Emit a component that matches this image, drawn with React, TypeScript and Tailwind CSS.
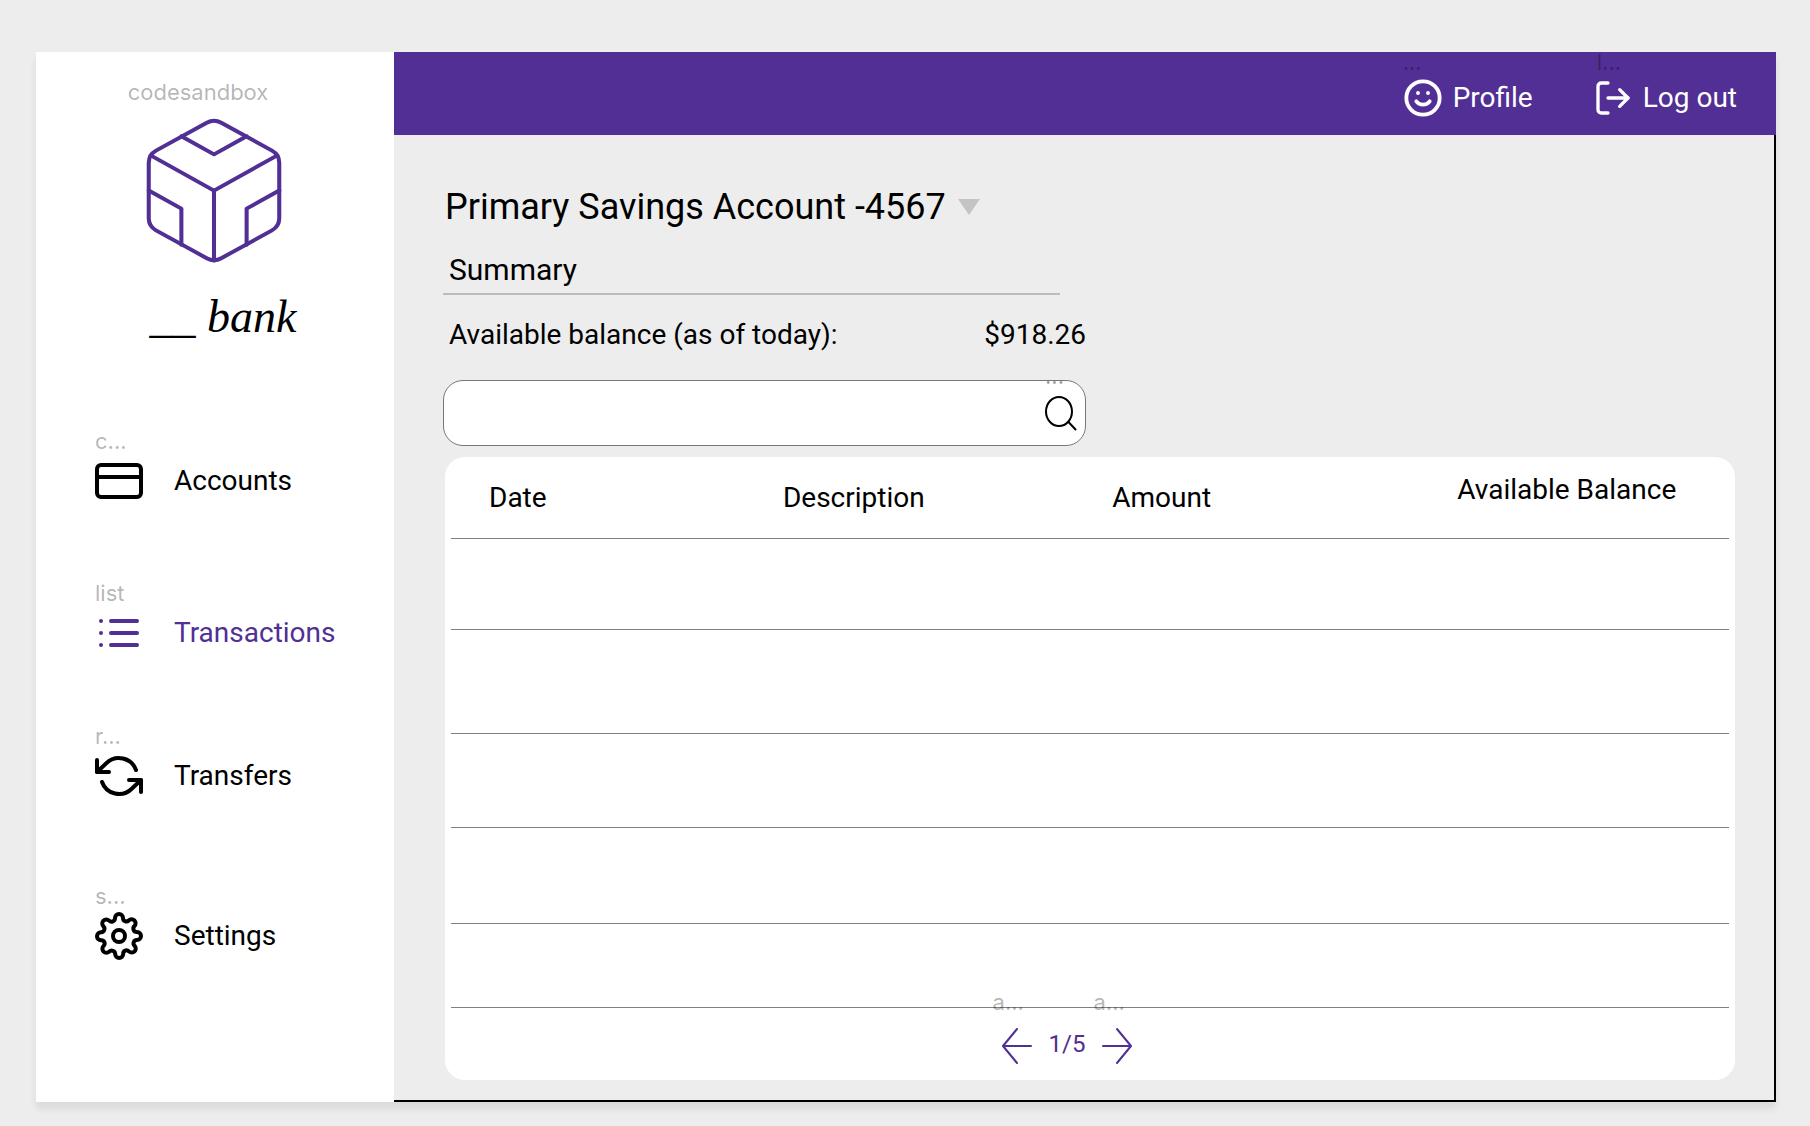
import React from "react";
import {
  FiCodesandbox,
  FiCreditCard,
  FiList,
  FiLogOut,
  FiRefreshCcw,
  FiSettings,
  FiSmile,
} from "react-icons/fi";

type TaggedIconProps = {
  tag: string;
  tagClass?: string;
  children: React.ReactNode;
};

/* An icon with its small layer name floating just above it. */
function TaggedIcon({ tag, tagClass = "text-black/30", children }: TaggedIconProps) {
  return (
    <span className="relative block shrink-0">
      <span
        className={`absolute bottom-full left-0 mb-1 font-[Inter,sans-serif] text-[22px] leading-6 whitespace-nowrap ${tagClass}`}
      >
        {tag}
      </span>
      {children}
    </span>
  );
}

const navItems = [
  { tag: "c...", label: "Accounts", Icon: FiCreditCard, spacing: "mt-[113px]", active: false },
  { tag: "list", label: "Transactions", Icon: FiList, spacing: "mt-[104px]", active: true },
  { tag: "r...", label: "Transfers", Icon: FiRefreshCcw, spacing: "mt-[95px]", active: false },
  { tag: "s...", label: "Settings", Icon: FiSettings, spacing: "mt-[112px]", active: false },
];

function Sidebar() {
  return (
    <aside className="w-[358px] shrink-0 bg-white">
      <div className="flex flex-col items-center">
        <span className="mt-7 pr-[34px] font-[Inter,sans-serif] text-[22px] leading-6 text-black/30">
          codesandbox
        </span>
        <FiCodesandbox
          className="mt-[3px] mr-0.5 h-[167px] w-[174px] text-[#512f94]"
          strokeWidth={0.56}
          preserveAspectRatio="none"
          aria-hidden="true"
        />
        <p className="mt-4 pl-4 font-['Liberation_Serif'] text-[46px] leading-[54px] italic">
          __ bank
        </p>
      </div>
      <nav className="pl-[59px]">
        {navItems.map(({ tag, label, Icon, spacing, active }) => (
          <a
            key={label}
            href={`#${label.toLowerCase()}`}
            className={`flex w-fit items-center gap-[31px] ${spacing} ${active ? "text-[#512f94]" : "text-black"}`}
          >
            <TaggedIcon tag={tag}>
              <Icon className="size-12" aria-hidden="true" />
            </TaggedIcon>
            <span className="text-[28px] leading-8">{label}</span>
          </a>
        ))}
      </nav>
    </aside>
  );
}

function TopBar() {
  return (
    <header className="flex h-[83px] items-center justify-end gap-[60px] bg-[#512f94] pt-2 pr-[39px] text-white">
      <a href="#profile" className="flex items-center gap-2.5">
        <TaggedIcon tag="...">
          <FiSmile className="size-10" strokeWidth={2.3} aria-hidden="true" />
        </TaggedIcon>
        <span className="text-[28px] leading-8">Profile</span>
      </a>
      <a href="#logout" className="flex items-center gap-2.5">
        <TaggedIcon tag="l..." tagClass="pl-1 text-black/30">
          <FiLogOut className="size-10" aria-hidden="true" />
        </TaggedIcon>
        <span className="text-[28px] leading-8">Log out</span>
      </a>
    </header>
  );
}

function Summary() {
  return (
    <section>
      <h1 className="relative flex w-fit items-center gap-3 pl-0.5">
        <select
          aria-label="Account"
          className="appearance-none bg-transparent text-[36px] leading-[44px] font-normal text-black"
        >
          <option>Primary Savings Account -4567</option>
        </select>
        <svg
          className="pointer-events-none h-4 w-[22px] fill-[#c4c4c4]"
          viewBox="0 0 22 16"
          aria-hidden="true"
        >
          <path d="M0 0h22L11 16z" />
        </svg>
      </h1>
      <h2 className="mt-6 w-[617px] border-b-2 border-[#bcbcbc] pb-1.5 pl-1.5 text-[30px] leading-[34px]">
        Summary
      </h2>
      <dl className="mt-6 flex w-[643px] justify-between pl-1.5 text-[28px] leading-8">
        <dt>Available balance (as of today):</dt>
        <dd>$918.26</dd>
      </dl>
    </section>
  );
}

function SearchBox() {
  return (
    <form
      role="search"
      className="mt-[29px] flex h-[66px] w-[643px] items-center rounded-[20px] border border-[#777] bg-white pr-2"
      onSubmit={(event) => event.preventDefault()}
    >
      <input
        type="text"
        aria-label="Search transactions"
        className="h-full min-w-0 flex-1 rounded-[20px] bg-transparent px-5 text-[28px] outline-none"
      />
      <button type="submit" aria-label="Search">
        <TaggedIcon tag="..." tagClass="text-black/40">
          <svg
            className="h-[42px] w-8 fill-none stroke-black stroke-2"
            viewBox="0 0 32 42"
            strokeLinecap="round"
            aria-hidden="true"
          >
            <ellipse cx="14" cy="19.5" rx="13" ry="14.5" />
            <path d="M23.5 30l7 7.5" />
          </svg>
        </TaggedIcon>
      </button>
    </form>
  );
}

const columns = [
  { title: "Date", size: "w-[23%]", align: "pl-[38px]" },
  { title: "Description", size: "w-[26%]", align: "pl-[38px]" },
  { title: "Amount", size: "w-[27%]", align: "pl-[35px]" },
  { title: "Available Balance", size: "w-[24%]", align: "pl-[35px] pb-4" },
];

const rowHeights = ["h-[91px]", "h-[104px]", "h-[94px]", "h-[96px]", "h-[84px]"];

function Transactions() {
  return (
    <section className="mt-[11px] ml-0.5 rounded-[20px] bg-white px-1.5">
      <table className="w-full table-fixed border-separate border-spacing-0">
        <thead>
          <tr className="h-[82px]">
            {columns.map(({ title, size, align }) => (
              <th
                key={title}
                scope="col"
                className={`border-b border-[#808080] text-left text-[28px] leading-8 font-normal whitespace-nowrap ${size} ${align}`}
              >
                {title}
              </th>
            ))}
          </tr>
        </thead>
        <tbody>
          {rowHeights.map((height) => (
            <tr key={height} className={height}>
              {columns.map(({ title }) => (
                <td key={title} className="border-b border-[#808080]" />
              ))}
            </tr>
          ))}
        </tbody>
      </table>
      <div className="flex h-[72px] items-center justify-center gap-2 pt-1 pr-[46px] text-[#512f94]">
        <button type="button" aria-label="Previous page">
          <TaggedIcon tag="a...">
            <svg
              className="h-14 w-12 fill-none stroke-current stroke-2"
              viewBox="0 0 48 56"
              strokeLinecap="round"
              strokeLinejoin="round"
              aria-hidden="true"
            >
              <path d="M38 28H10M24 11L10 28l14 17" />
            </svg>
          </TaggedIcon>
        </button>
        <span className="pb-1 text-[24px] leading-7">1/5</span>
        <button type="button" aria-label="Next page">
          <TaggedIcon tag="a...">
            <svg
              className="h-14 w-12 fill-none stroke-current stroke-2"
              viewBox="0 0 48 56"
              strokeLinecap="round"
              strokeLinejoin="round"
              aria-hidden="true"
            >
              <path d="M10 28h28M24 11l14 17-14 17" />
            </svg>
          </TaggedIcon>
        </button>
      </div>
    </section>
  );
}

export default function App() {
  return (
    <div className="flex min-h-screen bg-[#ededed] pt-[52px] pr-[34px] pb-6 pl-9 font-[Roboto,sans-serif] text-black">
      <div className="flex flex-1 shadow-[0_7px_7px_rgba(0,0,0,0.08)]">
        <Sidebar />
        <div className="flex min-w-0 flex-1 flex-col">
          <TopBar />
          <main className="flex-1 border-r-2 border-b-2 border-black bg-[#ededed] pt-[50px] pr-[39px] pb-5 pl-[49px]">
            <Summary />
            <SearchBox />
            <Transactions />
          </main>
        </div>
      </div>
    </div>
  );
}
